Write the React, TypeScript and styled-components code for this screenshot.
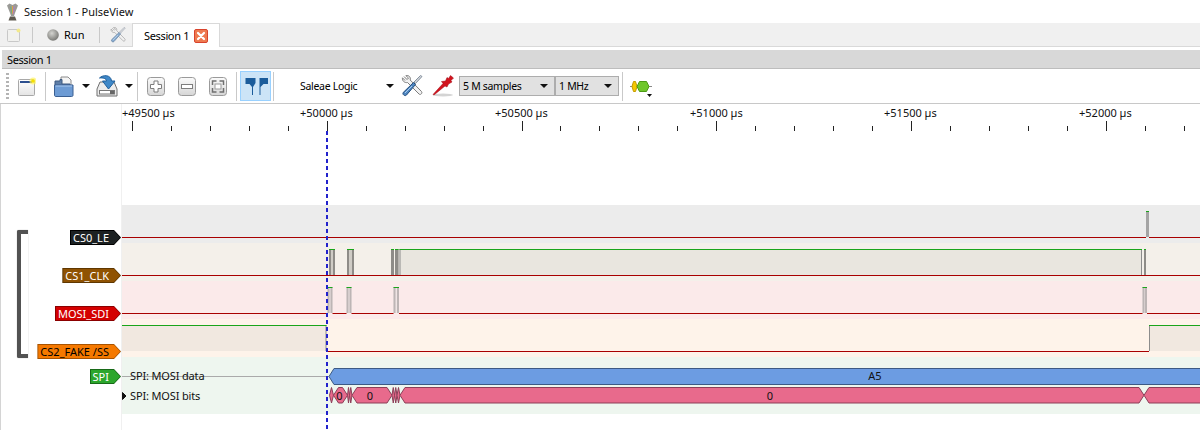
import React from 'react'
import styled, { createGlobalStyle } from 'styled-components'

const GlobalStyle = createGlobalStyle`
  html, body {
    margin: 0;
    padding: 0;
    background: #fff;
    overflow: hidden;
  }
  body {
    font-family: "Noto Sans", "Liberation Sans", sans-serif;
    font-size: 11px;
    color: #000;
  }
`

const Window = styled.div`
  width: 1200px;
  height: 430px;
  display: flex;
  flex-direction: column;
  overflow: hidden;
  background: #fff;
`

const TitleBar = styled.div`
  height: 23px;
  display: flex;
  align-items: center;
  padding-left: 7px;
  gap: 6px;
  font-size: 11px;
  color: #111;
`

const TabBar = styled.div`
  height: 23px;
  flex: none;
  display: flex;
  align-items: center;
  padding-left: 7px;
  background: #f0f0f0;
  border-bottom: 1px solid #d9d9d9;
`

const Slot = styled.div<{ $ml?: number; $w: number }>`
  flex: none;
  display: flex;
  align-items: center;
  justify-content: center;
  width: ${p => p.$w}px;
  margin-left: ${p => p.$ml ?? 0}px;
`

const Sep = styled.div<{ $ml: number; $h: number }>`
  flex: none;
  width: 1px;
  height: ${p => p.$h}px;
  margin-left: ${p => p.$ml}px;
  background: #c9c9c9;
`

const RunLabel = styled.span`
  margin-left: 5px;
  width: 20px;
  font-size: 11px;
`

const Tab = styled.div`
  flex: none;
  box-sizing: border-box;
  align-self: flex-start;
  width: 88px;
  height: 24px;
  margin-left: 6px;
  display: flex;
  align-items: center;
  gap: 5px;
  padding-left: 11px;
  background: #fff;
  border: 1px solid #d9d9d9;
  border-bottom: none;
  font-size: 11px;
  letter-spacing: -0.35px;
`

const DockFrame = styled.div`
  padding-top: 3px;
  flex: none;
`

const DockTitle = styled.div`
  height: 18px;
  margin-left: 2px;
  padding-left: 5px;
  display: flex;
  align-items: center;
  background: #d8d8d8;
  border-bottom: 1px solid #bdbdbd;
  font-size: 11px;
  letter-spacing: -0.4px;
`

const Toolbar = styled.div`
  height: 34px;
  display: flex;
  align-items: center;
  padding-left: 6px;
  background: #fff;
  border-bottom: 1px solid #c8c8c8;
`

const Handle = styled.div`
  flex: none;
  width: 3px;
  height: 26px;
  background: repeating-linear-gradient(to bottom, #b4b4b4 0 2px, transparent 2px 4px);
`

const Caret = styled.div`
  flex: none;
  width: 0;
  height: 0;
  border-left: 4px solid transparent;
  border-right: 4px solid transparent;
  border-top: 4px solid #111;
`

const PressedButton = styled.div`
  flex: none;
  box-sizing: border-box;
  width: 31px;
  height: 30px;
  margin-left: 3px;
  display: flex;
  align-items: center;
  justify-content: center;
  background: #cce4f7;
  border: 1px solid #99d1ff;
`

const DeviceSelect = styled.div`
  flex: none;
  width: 94px;
  margin-left: 26px;
  display: flex;
  align-items: center;
  justify-content: space-between;
  font-size: 10.5px;
  letter-spacing: -0.3px;
`

const Combo = styled.div<{ $w: number }>`
  flex: none;
  box-sizing: border-box;
  width: ${p => p.$w}px;
  height: 20px;
  display: flex;
  align-items: center;
  justify-content: space-between;
  padding: 0 6px 0 3px;
  background: #e1e1e1;
  border: 1px solid #adadad;
  font-size: 10.5px;
  letter-spacing: -0.3px;
`

const Combos = styled.div`
  flex: none;
  display: flex;
  margin-left: 5px;
`

const Viewport = styled.div`
  position: relative;
  flex: 1;
  min-height: 0;
`

const Row = styled.div<{ $h: number; $bg?: string }>`
  display: grid;
  grid-template-columns: 122px 1fr;
  height: ${p => p.$h}px;
  & > svg {
    display: block;
    background: ${p => p.$bg ?? '#fff'};
  }
`

const Header = styled.div<{ $pt?: number }>`
  box-sizing: border-box;
  display: flex;
  justify-content: flex-end;
  align-items: flex-start;
  padding: ${p => p.$pt ?? 0}px 1px 0 0;
  border-left: 1px solid #d4d4d4;
  border-right: 1px solid #f0f0f0;
`

const Filler = styled.div`
  flex: 1;
`

const TagShape = styled.div<{ $border: string }>`
  box-sizing: border-box;
  height: 15px;
  padding: 1px;
  background: ${p => p.$border};
  clip-path: polygon(0 0, calc(100% - 7px) 0, 100% 50%, calc(100% - 7px) 100%, 0 100%);
  margin-right: -1px;
`

const TagBody = styled.div<{ $bg: string; $fg: string }>`
  height: 13px;
  line-height: 13px;
  padding: 0 11px 0 2px;
  background: ${p => p.$bg};
  color: ${p => p.$fg};
  font-size: 11px;
  white-space: nowrap;
  clip-path: polygon(0 0, calc(100% - 6px) 0, 100% 50%, calc(100% - 6px) 100%, 0 100%);
`

const Bracket = styled.div`
  position: absolute;
  left: 17px;
  top: 126px;
  box-sizing: border-box;
  width: 11px;
  height: 128px;
  border: 4px solid #525252;
  border-right: none;
  border-radius: 2px 0 0 2px;
  box-shadow: 0 0 1px #888;
`

const Cursor = styled.div`
  position: absolute;
  left: 326px;
  top: 27px;
  bottom: 0;
  width: 2px;
  background: repeating-linear-gradient(to bottom, #2222cc 0 4px, transparent 4px 7px);
`

const rulerText = { fontFamily: '"Noto Sans", "Liberation Sans", sans-serif', fontSize: 11 }

// ruler ticks, in page x
const TICK = 38.95
const ticks = Array.from({ length: 28 }, (_, i) => 132 + i * TICK)
const majors = [
  { label: '+49500 µs', x: 122, i: 0 },
  { label: '+50000 µs', x: 300, i: 5 },
  { label: '+50500 µs', x: 495, i: 10 },
  { label: '+51000 µs', x: 690, i: 15 },
  { label: '+51500 µs', x: 884, i: 20 },
  { label: '+52000 µs', x: 1079, i: 25 },
]

const Ruler = () => (
  <svg width={1078} height={101} viewBox="122 0 1078 101">
    {majors.map(m => (
      <text key={m.label} x={m.x} y={13} style={rulerText} fill="#111">{m.label}</text>
    ))}
    {ticks.map((x, i) => (
      <rect key={i} x={Math.round(x)} y={i % 5 === 0 ? 17 : 22} width={1} height={i % 5 === 0 ? 10 : 5} fill="#222" />
    ))}
  </svg>
)

const HIGH = 6
const LOW = 32
const END = 1200

interface WaveProps {
  highs: [number, number][]
  fill: string
  edge: string
  pulse: string
  lowThrough?: boolean
  bg: string
}

// one logic trace, highs given as page x ranges
const LogicWave = ({ highs, fill, edge, pulse, lowThrough, bg }: WaveProps) => {
  const lows: [number, number][] = []
  let cur = 122
  highs.forEach(([a, b]) => {
    if (a > cur) lows.push([cur, a])
    cur = Math.max(cur, b)
  })
  if (cur < END) lows.push([cur, END])
  if (lowThrough) {
    const last = highs[highs.length - 1]
    lows.length = 0
    lows.push([122, highs[highs.length - 2][1]], [last[0] - 3, END])
  }
  return (
    <svg width={1078} height={38} viewBox="122 0 1078 38" style={{ background: bg }}>
      {lows.map(([a, b]) => (
        <rect key={a} x={a} y={LOW} width={b - a} height={1} fill="#a80000" />
      ))}
      {highs.map(([a, b]) => {
        const wide = b - a > 12
        return (
          <g key={a}>
            <rect x={a} y={HIGH} width={b - a} height={LOW - HIGH} fill={wide ? fill : pulse} />
            {a > 122 && <rect x={a} y={HIGH} width={wide ? 1 : 2} height={LOW - HIGH} fill={wide ? '#8c8c8c' : edge} />}
            {b < END && <rect x={b - (wide ? 1 : 2)} y={HIGH} width={wide ? 1 : 2} height={LOW - HIGH} fill={wide ? '#8c8c8c' : edge} />}
            <rect x={a} y={HIGH} width={b - a} height={1} fill="#1aa51a" />
          </g>
        )
      })}
    </svg>
  )
}

const hexagon = (a: number, b: number, top: number, bottom: number) => {
  const inset = Math.min(5, (b - a) / 2)
  const mid = (top + bottom) / 2
  return `${a},${mid} ${a + inset},${top} ${b - inset},${top} ${b},${mid} ${b - inset},${bottom} ${a + inset},${bottom}`
}

const bitSegments: [number, number][] = [
  [329.5, 333.5],
  [333.5, 347.5],
  [347.5, 349.5],
  [349.5, 352],
  [352, 392],
  [392, 394.5],
  [394.5, 397],
  [397, 400],
  [400, 1144],
  [1144, 1300],
]

const SpiTrace = () => (
  <svg width={1078} height={57} viewBox="122 0 1078 57">
    <rect x={122} y={19} width={207} height={1} fill="#aaa" />
    <text x={130} y={23} style={rulerText} letterSpacing={-0.15} fill="#111">SPI: MOSI data</text>
    <polygon points="122.5,35.5 126,39 122.5,42.5" fill="#111" stroke="#111" />
    <text x={130} y={43} style={rulerText} letterSpacing={-0.15} fill="#111">SPI: MOSI bits</text>
    <polygon points={hexagon(329, 1300, 11.5, 27.5)} fill="#6c9ce2" stroke="#3c5a85" />
    <text x={875} y={23} textAnchor="middle" style={rulerText} fill="#111">A5</text>
    {bitSegments.map(([a, b]) => (
      <polygon key={a} points={hexagon(a, b, 30.5, 46)} fill="#e86a8c" stroke="#8c3f58" />
    ))}
    <text x={339.5} y={43} textAnchor="middle" style={rulerText} fill="#111">0</text>
    <text x={370} y={43} textAnchor="middle" style={rulerText} fill="#111">0</text>
    <text x={770} y={43} textAnchor="middle" style={rulerText} fill="#111">0</text>
  </svg>
)

const AppIcon = () => (
  <svg width={11} height={18} viewBox="0 0 11 18">
    <path d="M0 2.5 L2.5 0.5 L5.5 2 L8.5 0.5 L11 2.5 L8 10 L7 13 H4 L3 10 Z" fill="#9a9a96" />
    <path d="M3.5 3.5 L5 11" stroke="#6fb06f" strokeWidth={0.9} />
    <path d="M5.5 3 V11" stroke="#e0a040" strokeWidth={0.9} />
    <path d="M7.5 3.5 L6 11" stroke="#b878c0" strokeWidth={0.9} />
    <path d="M3 13.5 H8 L9.5 17.5 H1.5 Z" fill="#5f5a50" />
  </svg>
)

const NewIcon = ({ size = 18 }: { size?: number }) => (
  <svg width={size} height={size + 1} viewBox="0 0 18 19">
    <defs>
      <linearGradient id="newPage" x1="0" y1="0" x2="0" y2="1">
        <stop offset="0" stopColor="#ffffff" />
        <stop offset="1" stopColor="#e4e4e4" />
      </linearGradient>
    </defs>
    <rect x={0.5} y={2.5} width={16} height={16} rx={1} fill="url(#newPage)" stroke="#a8a8a8" />
    <rect x={2} y={4} width={12} height={2} fill="#2c4f8f" />
    <circle cx={15} cy={4} r={3.5} fill="#fff36a" opacity={0.7} />
    <circle cx={15} cy={4} r={1.8} fill="#f5e000" />
  </svg>
)

const RunIcon = () => (
  <svg width={12} height={12} viewBox="0 0 12 12">
    <defs>
      <radialGradient id="runBall" cx="0.4" cy="0.35" r="0.7">
        <stop offset="0" stopColor="#d4d4d0" />
        <stop offset="1" stopColor="#73736f" />
      </radialGradient>
    </defs>
    <circle cx={6} cy={6} r={5.8} fill="url(#runBall)" />
  </svg>
)

const ToolsIcon = ({ size = 22, faded }: { size?: number; faded?: boolean }) => (
  <svg width={size} height={size} viewBox="0 0 22 22" opacity={faded ? 0.65 : 1}>
    <path d="M3 1.5 L6 4.5 L7.5 3 L4.8 0.6 C7.5 -0.2 10 2 9.2 5 L20.5 16.5 C21.8 18 19.5 20.5 18 19 L6.5 7.5 C3.5 8.2 0.8 5.5 1.5 2.8 L4 5.5" fill="#f2f2f2" stroke="#7d7d7d" strokeWidth={1} strokeLinejoin="round" />
    <path d="M21 1.5 L19.5 0.5 L13 7 L14.5 8.5 Z" fill="#d0d4da" stroke="#6f7c8c" strokeWidth={0.8} />
    <path d="M12.5 7.5 L14.5 9.5 L5.5 20 C4 21.7 1 19.5 2.2 17.5 Z" fill="#4f86c0" stroke="#244e7d" strokeWidth={1} strokeLinejoin="round" />
    <path d="M4 18 L11 11" stroke="#a8cdf0" strokeWidth={1} />
  </svg>
)

const CloseIcon = () => (
  <svg width={14} height={14} viewBox="0 0 14 14">
    <rect x={0.5} y={0.5} width={13} height={13} rx={1.5} fill="#ee7a50" stroke="#d8432c" />
    <path d="M4 4 L10 10 M10 4 L4 10" stroke="#fff" strokeWidth={2.2} strokeLinecap="round" />
  </svg>
)

const OpenIcon = () => (
  <svg width={20} height={21} viewBox="0 0 20 21">
    <path d="M7 1 H14 L17 4 V10 H7 Z" fill="#f4f4f4" stroke="#8a8a8a" />
    <path d="M1 5 H6 V3.5 H8 V8 H16 V10 H1 Z" fill="#5d7da6" stroke="#3e5a80" />
    <path d="M0.5 9 H19 V19 C19 20 18.5 20.5 17.5 20.5 H2 C1 20.5 0.5 20 0.5 19 Z" fill="#6d9bd4" stroke="#3a5f92" />
    <path d="M1.5 10 H18" stroke="#a9c9ee" />
  </svg>
)

const SaveIcon = () => (
  <svg width={22} height={22} viewBox="0 0 22 22">
    <path d="M4 7 L1 14 V21 H21 V14 L18 7 Z" fill="#ececec" stroke="#6f6f6f" />
    <rect x={3.5} y={15.5} width={15} height={3.5} fill="#fff" stroke="#777" />
    <rect x={14} y={16} width={4} height={3} fill="#666" />
    <path d="M3.5 3 C7 -0.5 15 -0.5 15.5 6 H19 L12.5 14 L6.5 6 H10.5 C10.5 3.5 7 2.5 3.5 3 Z" fill="#3f88c8" stroke="#1f5f9c" strokeLinejoin="round" />
  </svg>
)

const ZoomFrame = ({ children }: { children: React.ReactNode }) => (
  <svg width={18} height={19} viewBox="0 0 18 19">
    <defs>
      <linearGradient id="zoomFace" x1="0" y1="0" x2="0" y2="1">
        <stop offset="0" stopColor="#fbfbfb" />
        <stop offset="1" stopColor="#d6d6d6" />
      </linearGradient>
    </defs>
    <rect x={0.5} y={0.5} width={17} height={18} rx={3} fill="url(#zoomFace)" stroke="#9a9a9a" />
    {children}
  </svg>
)

const PinsIcon = () => (
  <svg width={24} height={18} viewBox="0 0 24 18">
    <path d="M1.5 1 H11.5 V6 L9 10 V18 H8 V10 L5.5 7 H1.5 Z" fill="#1b5c9b" />
    <path d="M24 1 H15.5 V18 H16.5 V10 L19.5 7 H24 Z" fill="#1b5c9b" />
  </svg>
)

const ProbeIcon = () => (
  <svg width={22} height={22} viewBox="0 0 22 22">
    <ellipse cx={11} cy={20} rx={10} ry={1.4} fill="#d4d4d4" />
    <path d="M1 19.5 L11 8.5 L9.5 6.5 L13.5 6 L15 2.5 L16.5 3.5 L18.5 0.5 L21.5 3 L19 5.5 L20 7 L16.5 9 L15 12 L13 11 L2 20 Z" fill="#d2141e" stroke="#9c0a14" strokeWidth={0.5} />
  </svg>
)

const DecoderIcon = () => (
  <svg width={22} height={22} viewBox="0 0 22 22">
    <path d="M0 11.5 H22" stroke="#888" />
    <polygon points="2,11.5 3.5,6.5 5.5,6.5 7,11.5 5.5,16.5 3.5,16.5" fill="#f5c800" stroke="#c49a00" />
    <polygon points="7,11.5 9.5,6.5 16.5,6.5 19,11.5 16.5,16.5 9.5,16.5" fill="#6fc72a" stroke="#4c9a14" />
    <polygon points="17,19 22,19 19.5,22" fill="#111" />
  </svg>
)

const App = () => {
  return (
    <Window>
      <GlobalStyle />
      <TitleBar>
        <AppIcon />
        <span>Session 1 - PulseView</span>
      </TitleBar>
      <TabBar>
        <Slot $w={14}><svg width={14} height={14} viewBox="0 0 14 14">
          <rect x={0.5} y={1.5} width={12} height={12} rx={1} fill="#f1f1ef" stroke="#c8c8c8" />
          <circle cx={11.5} cy={2.5} r={2} fill="#f3e98a" />
        </svg></Slot>
        <Sep $ml={11} $h={16} />
        <Slot $ml={14} $w={12}><RunIcon /></Slot>
        <RunLabel>Run</RunLabel>
        <Sep $ml={15} $h={16} />
        <Slot $ml={10} $w={16}><ToolsIcon size={16} faded /></Slot>
        <Tab>
          Session 1
          <CloseIcon />
        </Tab>
      </TabBar>
      <DockFrame>
        <DockTitle>Session 1</DockTitle>
      </DockFrame>
      <Toolbar>
        <Handle />
        <Slot $ml={9} $w={18}><NewIcon /></Slot>
        <Sep $ml={9} $h={29} />
        <Slot $ml={8} $w={20}><OpenIcon /></Slot>
        <Slot $ml={8} $w={8}><Caret /></Slot>
        <Slot $ml={6} $w={22}><SaveIcon /></Slot>
        <Slot $ml={7} $w={8}><Caret /></Slot>
        <Sep $ml={4} $h={29} />
        <Slot $ml={9} $w={18}>
          <ZoomFrame>
            <path d="M7 4 H11 V7.5 H14.5 V11.5 H11 V15 H7 V11.5 H3.5 V7.5 H7 Z" fill="#fff" stroke="#7d7d7d" />
          </ZoomFrame>
        </Slot>
        <Slot $ml={13} $w={18}>
          <ZoomFrame>
            <rect x={3.5} y={7.5} width={11} height={4} fill="#fff" stroke="#7d7d7d" />
          </ZoomFrame>
        </Slot>
        <Slot $ml={13} $w={18}>
          <ZoomFrame>
            <path d="M3.5 8 V4 H7.5 M10.5 4 H14.5 V8 M14.5 11 V15 H10.5 M7.5 15 H3.5 V11" fill="none" stroke="#6f6f6f" strokeWidth={1.5} />
            <rect x={6} y={7} width={6} height={5} fill="#fff" stroke="#9a9a9a" />
          </ZoomFrame>
        </Slot>
        <Sep $ml={9} $h={29} />
        <PressedButton><PinsIcon /></PressedButton>
        <Sep $ml={2} $h={29} />
        <DeviceSelect>
          Saleae Logic
          <Caret />
        </DeviceSelect>
        <Slot $ml={7} $w={22}><ToolsIcon /></Slot>
        <Slot $ml={9} $w={22}><ProbeIcon /></Slot>
        <Combos>
          <Combo $w={96}>5 M samples<Caret /></Combo>
          <Combo $w={64}>1 MHz<Caret /></Combo>
        </Combos>
        <Sep $ml={3} $h={29} />
        <Slot $ml={7} $w={22}><DecoderIcon /></Slot>
      </Toolbar>
      <Viewport>
        <Row $h={101}>
          <Header />
          <Ruler />
        </Row>
        <Row $h={38}>
          <Header $pt={25}>
            <TagShape $border="#000"><TagBody $bg="#1c2122" $fg="#fff">CS0_LE</TagBody></TagShape>
          </Header>
          <LogicWave bg="#ececec" fill="#dcdcdc" edge="#a4a4a4" pulse="#b8b8b8" highs={[[1146, 1149]]} />
        </Row>
        <Row $h={38}>
          <Header $pt={25}>
            <TagShape $border="#5f3700"><TagBody $bg="#8f5202" $fg="#fff">CS1_CLK</TagBody></TagShape>
          </Header>
          <LogicWave
            bg="#f4f0ea"
            fill="#e9e6df"
            edge="#8e8c88"
            pulse="#cfccc6"
            lowThrough
            highs={[[329, 335], [347, 354], [391, 394], [395, 398.5], [399.5, 1142], [1144, 1146]]}
          />
        </Row>
        <Row $h={38}>
          <Header $pt={25}>
            <TagShape $border="#8b0000"><TagBody $bg="#d40000" $fg="#fff">MOSI_SDI</TagBody></TagShape>
          </Header>
          <LogicWave
            bg="#fbeaea"
            fill="#efe0e0"
            edge="#bdb5b5"
            pulse="#efe4e4"
            highs={[[327.5, 332.5], [346.5, 351.5], [393.5, 399], [1142.5, 1147]]}
          />
        </Row>
        <Row $h={38}>
          <Header $pt={25}>
            <TagShape $border="#a85300"><TagBody $bg="#f57900" $fg="#000">CS2_FAKE /SS</TagBody></TagShape>
          </Header>
          <LogicWave bg="#fef3ea" fill="#f1e8e0" edge="#8c8c8c" pulse="#f1e8e0" highs={[[122, 326.5], [1149, 1200]]} />
        </Row>
        <Row $h={57} $bg="#eef6ef">
          <Header $pt={12}>
            <TagShape $border="#186a18"><TagBody $bg="#2ca62c" $fg="#fff">SPI</TagBody></TagShape>
          </Header>
          <SpiTrace />
        </Row>
        <Row $h={16}>
          <Header />
          <Filler />
        </Row>
        <Bracket />
        <Cursor />
      </Viewport>
    </Window>
  )
}

export default App
